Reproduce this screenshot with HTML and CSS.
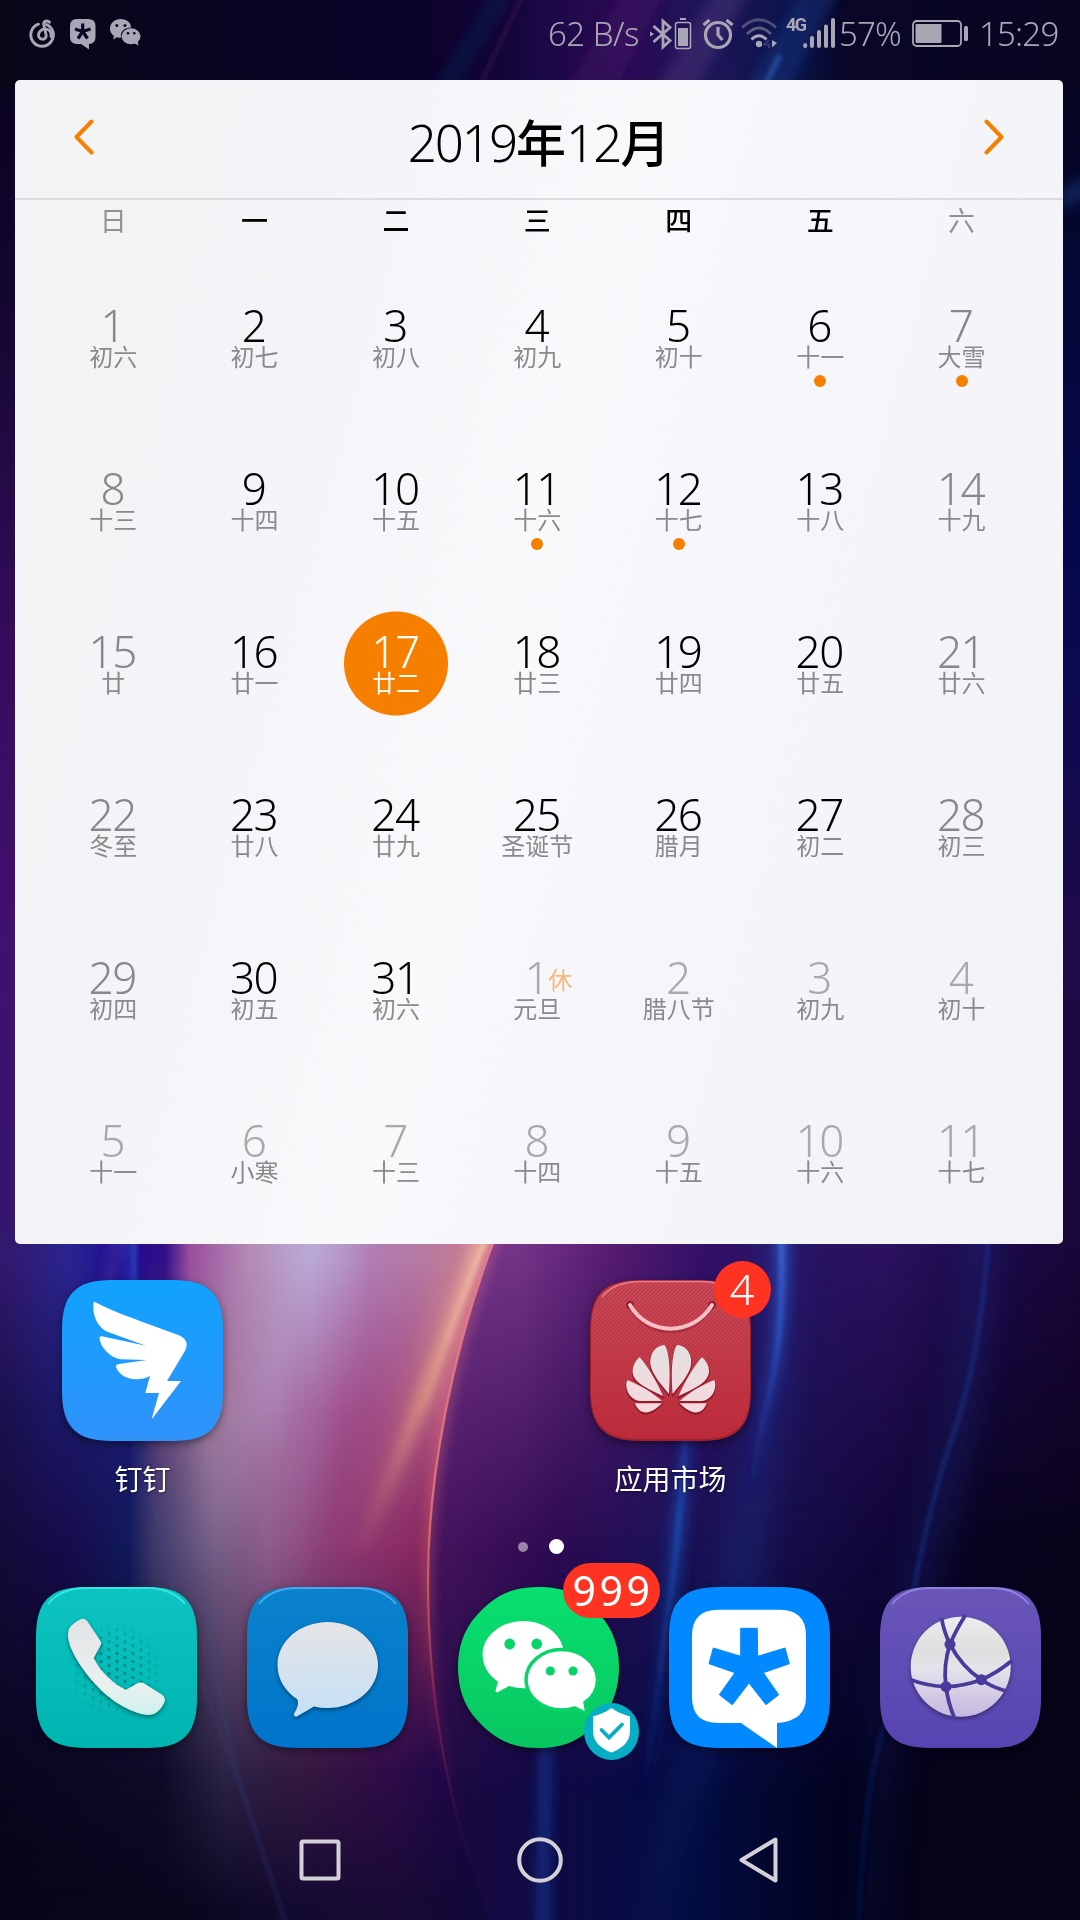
FILE: index.html
```html
<!DOCTYPE html>
<html lang="zh-CN">
<head>
<meta charset="utf-8">
<title>2019年12月</title>
<link rel="stylesheet" href="styles.css">
</head>
<body>
<svg class="wallpaper" viewBox="0 0 1080 1920" aria-hidden="true">
  <defs>
    <filter id="b2" filterUnits="userSpaceOnUse" x="-100" y="-100" width="1280" height="2120"><feGaussianBlur stdDeviation="2"/></filter>
    <filter id="b6" filterUnits="userSpaceOnUse" x="-100" y="-100" width="1280" height="2120"><feGaussianBlur stdDeviation="6"/></filter>
    <filter id="b16" filterUnits="userSpaceOnUse" x="-100" y="-100" width="1280" height="2120"><feGaussianBlur stdDeviation="16"/></filter>
    <linearGradient id="side" x2="0" y2="1">
      <stop offset="0" stop-color="#0a0618"/><stop offset=".1" stop-color="#0b0325"/><stop offset=".22" stop-color="#12062e"/>
      <stop offset=".37" stop-color="#250a48"/><stop offset=".5" stop-color="#360c5c"/><stop offset=".7" stop-color="#41106e"/><stop offset=".93" stop-color="#36156e"/><stop offset="1" stop-color="#2c1a70"/>
    </linearGradient>
    <linearGradient id="sideR" x2="0" y2="1">
      <stop offset="0" stop-color="#080620"/><stop offset=".08" stop-color="#060628"/><stop offset=".2" stop-color="#050840"/>
      <stop offset=".3" stop-color="#060850"/><stop offset=".4" stop-color="#120a50"/><stop offset=".5" stop-color="#200a48"/><stop offset=".64" stop-color="#1a0638"/><stop offset="1" stop-color="#08031a"/>
    </linearGradient>
    <linearGradient id="top"><stop offset="0" stop-color="#0a0618"/><stop offset=".37" stop-color="#0a0228"/><stop offset=".47" stop-color="#130638"/><stop offset=".5" stop-color="#1a0846"/><stop offset=".58" stop-color="#2b0a55"/><stop offset=".66" stop-color="#1c1658"/><stop offset=".74" stop-color="#0a1448"/><stop offset=".78" stop-color="#090628"/><stop offset="1" stop-color="#080620"/></linearGradient>
    <linearGradient id="l1" gradientUnits="userSpaceOnUse" x1="0" x2="500" y1="0" y2="0">
      <stop offset="0" stop-color="#33186b"/><stop offset=".14" stop-color="#2a2590"/><stop offset=".24" stop-color="#200a92"/><stop offset=".33" stop-color="#301088"/><stop offset=".38" stop-color="#9a4e9e"/><stop offset=".5" stop-color="#b48cb4"/><stop offset=".62" stop-color="#b8a4d0"/><stop offset=".74" stop-color="#b07cb4"/><stop offset=".88" stop-color="#b8789a"/><stop offset="1" stop-color="#c05a8c"/>
    </linearGradient>
    <linearGradient id="l2" gradientUnits="userSpaceOnUse" x1="0" x2="460" y1="0" y2="0">
      <stop offset="0" stop-color="#1a104c"/><stop offset=".12" stop-color="#1c1866"/><stop offset=".28" stop-color="#1c1c70"/><stop offset=".34" stop-color="#5a4078"/><stop offset=".45" stop-color="#a07a9c"/><stop offset=".6" stop-color="#a878a8"/><stop offset=".74" stop-color="#a0508c"/><stop offset=".9" stop-color="#a04880"/><stop offset="1" stop-color="#b85080"/>
    </linearGradient>
    <linearGradient id="l3" gradientUnits="userSpaceOnUse" x1="0" x2="430" y1="0" y2="0">
      <stop offset="0" stop-color="#120c38"/><stop offset=".15" stop-color="#170a4a"/><stop offset=".3" stop-color="#101a5a"/><stop offset=".36" stop-color="#3c3a6a"/><stop offset=".5" stop-color="#725c82"/><stop offset=".62" stop-color="#8c5a8a"/><stop offset=".78" stop-color="#8c3a74"/><stop offset="1" stop-color="#88265c"/>
    </linearGradient>
    <linearGradient id="l4" gradientUnits="userSpaceOnUse" x1="0" x2="450" y1="0" y2="0">
      <stop offset="0" stop-color="#0a051e"/><stop offset=".36" stop-color="#100a28"/><stop offset=".5" stop-color="#2c2446"/><stop offset=".68" stop-color="#351840"/><stop offset=".86" stop-color="#300c48"/><stop offset="1" stop-color="#1c0848"/>
    </linearGradient>
    <linearGradient id="l5" gradientUnits="userSpaceOnUse" x1="0" x2="490" y1="0" y2="0">
      <stop offset="0" stop-color="#080418"/><stop offset=".4" stop-color="#0a061e"/><stop offset=".6" stop-color="#130a30"/><stop offset=".8" stop-color="#180a34"/><stop offset="1" stop-color="#100838"/>
    </linearGradient>
    <linearGradient id="r1" gradientUnits="userSpaceOnUse" x1="430" x2="1080" y1="0" y2="0">
      <stop offset="0" stop-color="#74348a"/><stop offset=".14" stop-color="#743488"/><stop offset=".28" stop-color="#561c70"/><stop offset=".42" stop-color="#341068"/><stop offset=".55" stop-color="#281464"/><stop offset=".7" stop-color="#2c1260"/><stop offset=".86" stop-color="#1c0a4a"/><stop offset="1" stop-color="#1a0638"/>
    </linearGradient>
    <linearGradient id="r3" gradientUnits="userSpaceOnUse" x1="425" x2="1080" y1="0" y2="0">
      <stop offset="0" stop-color="#48145e"/><stop offset=".2" stop-color="#2c0a50"/><stop offset=".36" stop-color="#1c1258"/><stop offset=".5" stop-color="#18104e"/><stop offset=".7" stop-color="#100638"/><stop offset=".85" stop-color="#08031e"/><stop offset="1" stop-color="#08031a"/>
    </linearGradient>
    <linearGradient id="r5" gradientUnits="userSpaceOnUse" x1="430" x2="1080" y1="0" y2="0">
      <stop offset="0" stop-color="#1c0a40"/><stop offset=".2" stop-color="#0e0a44"/><stop offset=".4" stop-color="#030c42"/><stop offset=".62" stop-color="#020320"/><stop offset=".75" stop-color="#060218"/><stop offset="1" stop-color="#090518"/>
    </linearGradient>
    <linearGradient id="fade" x2="0" y2="1"><stop offset="0" stop-color="#fff" stop-opacity="0"/><stop offset="1" stop-color="#fff"/></linearGradient>
    <mask id="m2" maskUnits="userSpaceOnUse" x="0" y="0" width="1080" height="1920"><rect y="1260" width="1080" height="150" fill="url(#fade)"/><rect y="1410" width="1080" height="510" fill="#fff"/></mask>
    <mask id="m3" maskUnits="userSpaceOnUse" x="0" y="0" width="1080" height="1920"><rect y="1410" width="1080" height="140" fill="url(#fade)"/><rect y="1550" width="1080" height="370" fill="#fff"/></mask>
    <mask id="m4" maskUnits="userSpaceOnUse" x="0" y="0" width="1080" height="1920"><rect y="1550" width="1080" height="220" fill="url(#fade)"/><rect y="1770" width="1080" height="150" fill="#fff"/></mask>
    <mask id="m5" maskUnits="userSpaceOnUse" x="0" y="0" width="1080" height="1920"><rect y="1770" width="1080" height="140" fill="url(#fade)"/><rect y="1910" width="1080" height="10" fill="#fff"/></mask>
    <mask id="mr3" maskUnits="userSpaceOnUse" x="0" y="0" width="1080" height="1920"><rect y="1250" width="1080" height="300" fill="url(#fade)"/><rect y="1550" width="1080" height="370" fill="#fff"/></mask>
    <mask id="mr5" maskUnits="userSpaceOnUse" x="0" y="0" width="1080" height="1920"><rect y="1550" width="1080" height="250" fill="url(#fade)"/><rect y="1800" width="1080" height="120" fill="#fff"/></mask>
    <clipPath id="leftClip"><path d="M499 1230C452 1350 428 1480 428 1580C428 1700 447 1800 488 1920H0V1230Z"/></clipPath>
    <linearGradient id="edge" gradientUnits="userSpaceOnUse" x1="0" x2="0" y1="1240" y2="1880">
      <stop offset="0" stop-color="#e8788c"/><stop offset=".4" stop-color="#e87878"/><stop offset=".55" stop-color="#d0605e"/><stop offset=".72" stop-color="#9a2c58" stop-opacity=".7"/><stop offset="1" stop-color="#501048" stop-opacity="0"/>
    </linearGradient>
    <linearGradient id="warm" gradientUnits="userSpaceOnUse" x1="0" x2="0" y1="1240" y2="1560">
      <stop offset="0" stop-color="#ecb49c"/><stop offset=".5" stop-color="#e09880"/><stop offset="1" stop-color="#c06878" stop-opacity="0"/>
    </linearGradient>
    <linearGradient id="core" gradientUnits="userSpaceOnUse" x1="0" x2="0" y1="1240" y2="1420">
      <stop offset="0" stop-color="#f0c8a8"/><stop offset=".5" stop-color="#f0b0a8" stop-opacity=".6"/><stop offset="1" stop-color="#e89888" stop-opacity="0"/>
    </linearGradient>
    <linearGradient id="blueA" gradientUnits="userSpaceOnUse" x1="0" x2="0" y1="1240" y2="1500">
      <stop offset="0" stop-color="#3a70e4"/><stop offset=".35" stop-color="#2a58c8"/><stop offset="1" stop-color="#1c2c90" stop-opacity="0"/>
    </linearGradient>
    <linearGradient id="blueB" gradientUnits="userSpaceOnUse" x1="0" x2="0" y1="1400" y2="1800">
      <stop offset="0" stop-color="#1c3ca8" stop-opacity=".5"/><stop offset=".3" stop-color="#1c50b8"/><stop offset=".6" stop-color="#1440a0" stop-opacity=".7"/><stop offset="1" stop-color="#0c2878" stop-opacity="0"/>
    </linearGradient>
    <linearGradient id="blueC" gradientUnits="userSpaceOnUse" x1="0" x2="0" y1="1240" y2="1920">
      <stop offset="0" stop-color="#2446b0"/><stop offset=".5" stop-color="#1a44a8"/><stop offset="1" stop-color="#103080" stop-opacity=".5"/>
    </linearGradient>
    <linearGradient id="soft" gradientUnits="userSpaceOnUse" x1="0" x2="0" y1="1240" y2="1620">
      <stop offset="0" stop-color="#c0b4e4"/><stop offset="1" stop-color="#a080c0" stop-opacity="0"/>
    </linearGradient>
  </defs>
  <rect width="1080" height="1920" fill="#0a0520"/>
  <rect width="540" height="1300" fill="url(#side)"/>
  <rect x="540" width="540" height="1920" fill="url(#sideR)"/>
  <rect width="1080" height="88" fill="url(#top)"/>
  <g filter="url(#b6)">
    <path d="M720 -20H756L690 100H650Z" fill="#6a4a90" opacity=".3"/>
    <path d="M630 -20H670L610 100H560Z" fill="#48106a" opacity=".35"/>
    <path d="M806 -20H846L782 100H740Z" fill="#16388a" opacity=".4"/>
    <path d="M500 -20H520L450 100H425Z" fill="#143070" opacity=".25"/>
    <path d="M1090 175V195L1060 212V190Z" fill="#1c4890" opacity=".4"/>
  </g>
  <g filter="url(#b2)"><path d="M780 55L762 92" stroke="#3470c8" stroke-width="6" opacity=".5"/><path d="M525 -10L478 90" stroke="#50205c" stroke-width="3" opacity=".5"/></g>

  <rect y="1238" width="1080" height="682" fill="url(#r1)"/>
  <rect y="1238" width="1080" height="682" fill="url(#r3)" mask="url(#mr3)"/>
  <rect y="1238" width="1080" height="682" fill="url(#r5)" mask="url(#mr5)"/>
  <g fill="none">
    <g filter="url(#b16)" stroke="url(#blueC)" opacity=".28"><path d="M776 1200C786 1420 745 1480 735 1640C720 1740 660 1800 650 1960" stroke-width="34"/><path d="M980 1200C985 1420 920 1530 890 1700L870 1960" stroke-width="24"/></g>
    <g filter="url(#b6)"><path d="M780 1200Q788 1320 768 1400Q750 1480 750 1560" stroke="url(#blueA)" stroke-width="12" opacity=".6"/><path d="M690 1400Q678 1540 664 1660Q655 1740 636 1860" stroke="url(#blueB)" stroke-width="16" opacity=".55"/><path d="M548 1700Q543 1800 543 1960" stroke="#143c9c" stroke-width="14" opacity=".6"/></g>
    <g filter="url(#b2)"><path d="M779 1200Q788 1320 768 1400T752 1520" stroke="url(#blueA)" stroke-width="5" opacity=".8"/><path d="M688 1400Q681 1520 670 1600T640 1820" stroke="url(#blueB)" stroke-width="5" opacity=".75"/><path d="M990 1200Q986 1330 958 1420Q930 1500 914 1590Q905 1640 880 1740Q860 1820 858 1960" stroke="url(#blueC)" stroke-width="4" opacity=".45"/></g>
  </g>
  <g clip-path="url(#leftClip)">
    <rect y="1230" width="520" height="690" fill="url(#l1)"/>
    <rect y="1230" width="520" height="690" fill="url(#l2)" mask="url(#m2)"/>
    <rect y="1230" width="520" height="690" fill="url(#l3)" mask="url(#m3)"/>
    <rect y="1230" width="520" height="690" fill="url(#l4)" mask="url(#m4)"/>
    <rect y="1230" width="520" height="690" fill="url(#l5)" mask="url(#m5)"/>
    <g filter="url(#b16)" fill="none"><path d="M316 1200Q300 1330 245 1440T200 1620" stroke="url(#soft)" stroke-width="28" opacity=".5"/><path d="M350 1200Q325 1400 270 1620" stroke="url(#soft)" stroke-width="20" opacity=".35"/><path d="M495 1200Q430 1380 335 1620" stroke="url(#warm)" stroke-width="30" opacity=".45"/></g>
    <g filter="url(#b6)" fill="none"><path d="M128 1200Q128 1300 134 1400T150 1620" stroke="url(#blueA)" stroke-width="10" opacity=".35"/><path d="M493 1200Q440 1370 355 1560" stroke="url(#warm)" stroke-width="14" opacity=".8"/><path d="M124 1200L100 1330" stroke="#50369c" stroke-width="8" opacity=".7"/></g>
    <g filter="url(#b2)" fill="none"><path d="M498 1210Q455 1310 420 1420" stroke="url(#core)" stroke-width="6" opacity=".85"/><path d="M134 1220V1330" stroke="url(#blueA)" stroke-width="4" opacity=".5"/><path d="M144 1450Q170 1600 212 1710T290 1940" stroke="#455ab0" stroke-width="2.500" opacity=".16"/><path d="M205 1600Q225 1750 262 1850L292 1940" stroke="#3060a0" stroke-width="2.500" opacity=".2"/></g>
  </g>
  <path d="M499 1230C452 1350 428 1480 428 1580C428 1700 447 1800 488 1920" fill="none" stroke="url(#edge)" stroke-width="7" filter="url(#b6)" opacity=".5"/>
  <path d="M498 1230C451 1350 428 1480 428 1580C428 1700 447 1800 488 1920" fill="none" stroke="url(#edge)" stroke-width="2.300" opacity=".85"/>
</svg>

<div class="screen">
  <header class="status">
    <div class="notices">
      <svg width="27" height="30" viewBox="0 0 27 30" fill="none" stroke="currentColor" stroke-width="2.900" stroke-linecap="round"><path d="M9.500 5.200A11.300 11.300 0 1 0 17.500 5.500"/><path d="M20.500 3.200C18.500 1 14.500 2 14.700 5.200L17 15.500C17.700 18.700 15.800 20.200 13.700 20.200C10.500 20.200 9 17.500 9.700 14.700C10.500 11.500 14 9.500 17.500 10.200C21 11 22.500 14 22 17.500"/></svg>
      <svg width="26" height="31" viewBox="0 0 26 31"><path d="M7 0H18Q25.500 0 25.500 7V18Q25.500 24.500 19 25V30.500L11 25H7Q0 25 0 18V7Q0 0 7 0Z" fill="currentColor"/><path d="M12.700 12.500V4.500M12.700 12.500L20.500 10M12.700 12.500L17.500 19.500M12.700 12.500L8 19.500M12.700 12.500L5 10" stroke="#0b0522" stroke-width="3.200"/></svg>
      <svg width="31" height="27" viewBox="0 0 31 27" fill="currentColor"><path d="M10.500 0C17 0 21 4 21 8.500C14 8.500 10 13 11 18.500Q9 19 7 18.300L3 20.500L4 17Q0 14 0 9.500C0 4 5 0 10.500 0Z"/><ellipse cx="21" cy="17.300" rx="9.500" ry="8"/><path d="M24 24L28.500 26.500L27.500 21Z"/><g fill="#0b0522"><circle cx="6.800" cy="6.500" r="1.500"/><circle cx="15" cy="6.500" r="1.500"/><circle cx="18" cy="14.200" r="1.300"/><circle cx="24.300" cy="14.200" r="1.300"/></g></svg>
    </div>
    <div class="system">
      <span class="rate">62 B/s</span>
      <svg class="bt" width="42" height="32" viewBox="0 0 42 32"><path d="M3.500 8L20 22.500L13 29V3L20 9.500L3.500 24" fill="none" stroke="currentColor" stroke-width="2.800"/><path d="M0 13.500L4 16L0 18.500Z" fill="currentColor"/><rect x="25.500" y="4.500" width="15" height="26" rx="2" fill="none" stroke="currentColor" stroke-width="1.500"/><path d="M30 0H36V2H30ZM28 10H38V28H28Z" fill="currentColor"/></svg>
      <svg class="alarm" width="32" height="32" viewBox="0 0 32 32" fill="none" stroke="currentColor"><circle cx="16" cy="17" r="12.500" stroke-width="3.200"/><path d="M16 9V17L20.500 22" stroke-width="3.200"/><path d="M1.500 7L7.500 2M30.500 7L24.500 2" stroke-width="3"/></svg>
      <svg class="wifi" width="38" height="32" viewBox="0 0 38 32" fill="none" stroke="currentColor"><path d="M1 9.500Q18 -6 35 9.500" stroke-width="2.700" opacity=".4"/><path d="M6 16Q18 4 30 16" stroke-width="2.700" opacity=".5"/><path d="M10.500 21.500Q18 14 25.500 21.500" stroke-width="2.900"/><circle cx="18" cy="26" r="3.200" fill="currentColor" stroke="none"/><path d="M31 22L36 25L31 29.500Z" fill="currentColor" stroke="none"/><path d="M28 22L23 26.500H28V30" opacity=".3" stroke-width="1.500"/></svg>
      <span class="gen">4G</span>
      <svg class="bars" width="33" height="31" viewBox="0 0 33 31" stroke="currentColor" stroke-width="4" stroke-linecap="round"><path d="M2.200 27V28M9 20V28M16 14V28M23 8.500V28M30 2V28"/></svg>
      <span class="pct">57%</span>
      <svg class="batt" width="57" height="27" viewBox="0 0 57 27"><rect x="1" y="1" width="48" height="25" rx="3.500" fill="none" stroke="currentColor" stroke-width="1.800"/><rect x="3.500" y="4" width="26" height="19" rx="1" fill="currentColor"/><rect x="52" y="6" width="4" height="15" rx="1.500" fill="currentColor"/></svg>
      <span class="clock">15:29</span>
    </div>
  </header>

  <main class="card">
    <div class="month">
      <svg width="20" height="36" viewBox="0 0 20 36" fill="none" stroke="#f77f00" stroke-width="4" stroke-linecap="round" stroke-linejoin="round"><path d="M17.500 2.500L2.500 18L17.500 33.500"/></svg>
      <h1>2019<b>年</b>12<b>月</b></h1>
      <svg width="20" height="36" viewBox="0 0 20 36" fill="none" stroke="#f77f00" stroke-width="4" stroke-linecap="round" stroke-linejoin="round"><path d="M2.500 2.500L17.500 18L2.500 33.500"/></svg>
    </div>
    <div class="week"><span class="off">日</span><span>一</span><span>二</span><span>三</span><span>四</span><span>五</span><span class="off">六</span></div>
    <div class="days">
      <div class="day off"><i>1</i><em>初六</em></div><div class="day"><i>2</i><em>初七</em></div><div class="day"><i>3</i><em>初八</em></div><div class="day"><i>4</i><em>初九</em></div><div class="day"><i>5</i><em>初十</em></div><div class="day event"><i>6</i><em>十一</em></div><div class="day off event"><i>7</i><em>大雪</em></div>
      <div class="day off"><i>8</i><em>十三</em></div><div class="day"><i>9</i><em>十四</em></div><div class="day"><i>10</i><em>十五</em></div><div class="day event"><i>11</i><em>十六</em></div><div class="day event"><i>12</i><em>十七</em></div><div class="day"><i>13</i><em>十八</em></div><div class="day off"><i>14</i><em>十九</em></div>
      <div class="day off"><i>15</i><em>廿</em></div><div class="day"><i>16</i><em>廿一</em></div><div class="day today"><i>17</i><em>廿二</em></div><div class="day"><i>18</i><em>廿三</em></div><div class="day"><i>19</i><em>廿四</em></div><div class="day"><i>20</i><em>廿五</em></div><div class="day off"><i>21</i><em>廿六</em></div>
      <div class="day off"><i>22</i><em>冬至</em></div><div class="day"><i>23</i><em>廿八</em></div><div class="day"><i>24</i><em>廿九</em></div><div class="day"><i>25</i><em>圣诞节</em></div><div class="day"><i>26</i><em>腊月</em></div><div class="day"><i>27</i><em>初二</em></div><div class="day off"><i>28</i><em>初三</em></div>
      <div class="day off"><i>29</i><em>初四</em></div><div class="day"><i>30</i><em>初五</em></div><div class="day"><i>31</i><em>初六</em></div><div class="day next"><i>1<span class="rest">休</span></i><em>元旦</em></div><div class="day next"><i>2</i><em>腊八节</em></div><div class="day next"><i>3</i><em>初九</em></div><div class="day next"><i>4</i><em>初十</em></div>
      <div class="day next"><i>5</i><em>十一</em></div><div class="day next"><i>6</i><em>小寒</em></div><div class="day next"><i>7</i><em>十三</em></div><div class="day next"><i>8</i><em>十四</em></div><div class="day next"><i>9</i><em>十五</em></div><div class="day next"><i>10</i><em>十六</em></div><div class="day next"><i>11</i><em>十七</em></div>
    </div>
  </main>

  <section class="apps">
    <div class="app">
      <svg class="icon" viewBox="0 0 161 161">
        <defs><linearGradient id="ding" x2="0" y2="1"><stop offset="0" stop-color="#10a2ff"/><stop offset="1" stop-color="#3092fa"/></linearGradient>
        <path id="tile" d="M0 50C0 14 14 0 50 0H111C147 0 161 14 161 50V111C161 147 147 161 111 161H50C14 161 0 147 0 111Z"/></defs>
        <use href="#tile" fill="url(#ding)"/>
        <path fill="#fff" d="M31.500 23Q32 21 34 22.500C50 31 65 36 80.600 42L115 54.500Q128 59 123.500 70L105 101H119L89.500 139.500L97 113H83.300L88 96C76 102 59 100 54 87Q53.500 84.500 57 84L84.700 80L58 79.300C47 77 38 66 37.500 58Q37.500 55.500 41 56.500L84 65.700L46 52C36 48 30 36 31.500 23Z"/>
      </svg>
      <span>钉钉</span>
    </div>
    <div class="app market">
      <svg class="icon" viewBox="0 0 161 161">
        <defs><linearGradient id="hw" x2="0" y2="1"><stop offset="0" stop-color="#c94a58"/><stop offset="1" stop-color="#c02c3c"/></linearGradient>
        <linearGradient id="petal" gradientUnits="userSpaceOnUse" x1="0" x2="0" y1="65" y2="133"><stop offset="0" stop-color="#e2e0e0"/><stop offset="1" stop-color="#f8d8de"/></linearGradient>
        <pattern id="weave" width="4" height="4" patternUnits="userSpaceOnUse"><path d="M0 4L4 0" stroke="#9c2030" stroke-width=".8" opacity=".55"/></pattern>
        <g id="petals"><path d="M78.900 114C80.500 95 80 72 74.500 65C64 66 58.500 76 61 87C63.500 96 71 104 78.900 114Z"/><path d="M73 116C67 102 59 88 49.600 77C41 85 40.500 95 47 101C53 107 63 111 73 116Z"/><path d="M72 121C62 112 50 105 37.200 100C34 109 40 120 50 121Z"/><path d="M72 123.300H44.800C48 131 53 133.500 59 132C64 130.500 68 127 72 123.300Z"/></g></defs>
        <use href="#tile" fill="#a02030"/><path d="M1 50C1 15 15 1 50 1H111C146 1 160 15 160 50V110C160 145 146 159 111 159H50C15 159 1 145 1 110Z" fill="url(#hw)"/><use href="#tile" fill="url(#weave)"/>
        <path d="M12 17C21 6 33 1.500 50 1.500H111C128 1.500 140 6 149 17" fill="none" stroke="#e8808e" stroke-width="1.500"/>
        <circle cx="40" cy="25" r="3.800" fill="#8c1828"/><circle cx="122" cy="25" r="3.800" fill="#8c1828"/>
        <path d="M40 26C58 59 103 59 122 26" fill="none" stroke="#8c1828" stroke-width="5" opacity=".4"/>
        <path d="M40 25C58 56.500 103 56.500 122 25" fill="none" stroke="#f6c0c8" stroke-width="4" stroke-linecap="round"/>
        <g fill="#851525" opacity=".75" stroke="#851525" stroke-width="1.500" transform="translate(0 1.500)"><use href="#petals"/><use href="#petals" transform="translate(161.600 0) scale(-1 1)"/></g>
        <g fill="url(#petal)"><use href="#petals"/><use href="#petals" transform="translate(161.600 0) scale(-1 1)"/></g>
      </svg>
      <b class="badge one">4</b>
      <span>应用市场</span>
    </div>
  </section>

  <div class="pager"><i></i><i class="on"></i></div>

  <section class="dock">
    <div class="app"><svg class="icon" viewBox="0 0 161 161">
      <defs><linearGradient id="tel" x2="0" y2="1"><stop offset="0" stop-color="#0cc4c2"/><stop offset="1" stop-color="#00b4b0"/></linearGradient>
      <linearGradient id="set" x2="0" y2="1"><stop offset="0" stop-color="#e4e4e6"/><stop offset=".7" stop-color="#eaf0f0"/><stop offset="1" stop-color="#cdf0ec"/></linearGradient>
      <pattern id="mesh" width="16" height="8" patternUnits="userSpaceOnUse" x="61" y="62.500"><circle cx="4" cy="4" r="1.600" fill="#007c7c"/><circle cx="12" cy="0" r="1.600" fill="#007c7c"/><circle cx="12" cy="8" r="1.600" fill="#007c7c"/></pattern>
      <radialGradient id="spot" gradientUnits="userSpaceOnUse" cx="80" cy="83" r="50"><stop offset=".35" stop-color="#fff"/><stop offset="1" stop-color="#fff" stop-opacity="0"/></radialGradient><mask id="spotMask"><rect width="161" height="161" fill="url(#spot)"/></mask></defs>
      <use href="#tile" fill="url(#tel)"/><path d="M12 17C21 6 33 1 50 1H111C128 1 140 6 149 17" fill="none" stroke="#38e4e2" stroke-width="1.800"/>
      <rect width="161" height="161" fill="url(#mesh)" mask="url(#spotMask)"/>
      <path class="lift" fill="url(#set)" d="M44 32.500Q49 30.500 51.500 34.500L64.500 54Q65.800 57 64 59.500L57.700 71C64 84 77 97 90 102.700L101 96.500Q105 94.500 109 97L126.500 108Q130 111 128.500 115C127 119 124 123 120 126Q117 128 112 128C98 127 77 116 62 100C45 82 31 60 32 46Q32 42 35 39Q39 35 44 32.500Z"/>
    </svg></div>
    <div class="app"><svg class="icon" viewBox="0 0 161 161">
      <defs><linearGradient id="sms" x2="0" y2="1"><stop offset="0" stop-color="#0a82cc"/><stop offset="1" stop-color="#0074ca"/></linearGradient><linearGradient id="bub" x2="0" y2="1"><stop offset="0" stop-color="#e4e4e6"/><stop offset="1" stop-color="#c6e0f6"/></linearGradient></defs>
      <use href="#tile" fill="url(#sms)"/><path d="M12 17C21 6 33 1 50 1H111C128 1 140 6 149 17" fill="none" stroke="#48a8ec" stroke-width="1.800"/>
      <path class="lift" fill="url(#bub)" d="M80.700 35C108.300 35 131 54.300 131 78C131 102 108.300 121 80.700 121Q73 121 67 119.500C62 122 56 126 50 129.500Q46 130 47 126.500C51 120 52 116 50 112C39 105 30.500 93 30.500 78C30.500 54.300 53 35 80.700 35Z"/>
    </svg></div>
    <div class="app wechat"><svg class="icon" viewBox="0 0 161 161">
      <defs><linearGradient id="wx" x2="0" y2="1"><stop offset="0" stop-color="#08e070"/><stop offset="1" stop-color="#08c660"/></linearGradient></defs>
      <path fill="url(#wx)" d="M0 80C0 62 5 43 19 28C38 7 56 0 80.500 0C105 0 123 7 142 28C156 43 161 62 161 80C161 99 156 118 142 133C123 154 105 161 80.500 161C56 161 38 154 19 133C5 118 0 99 0 80Z"/>
      <path fill="#fff" d="M65.300 34C87.800 34 106 49 106 67.700C106 86 88 101.300 65.300 101.300Q57 101 51 99L40 105Q36.500 106 38 102L40 94.500C30 88 24.600 78 24.600 67.700C24.600 49 43 34 65.300 34Z"/>
      <path fill="#fff" stroke="#08d468" stroke-width="3.500" d="M103.500 62.500C123 62.500 139.500 76 139.500 92.700C139.500 102 135 110 127 115.500L129 127L117 121Q110 123 103.500 123C84 123 68 109.500 68 92.700C68 76 84 62.500 103.500 62.500Z"/>
      <g fill="#08d468"><circle cx="51.700" cy="57" r="5.400"/><circle cx="78.700" cy="57" r="5.400"/><circle cx="92.300" cy="84" r="4.600"/><circle cx="115" cy="84" r="4.600"/></g>
    </svg>
      <b class="badge many">999</b>
      <svg class="shield" viewBox="0 0 55 57"><ellipse cx="27.500" cy="28.500" rx="27.500" ry="28.500" fill="#06adc4"/><path fill="#fff" d="M27.500 5Q35 10.500 46 13.500V28C46 39 38 45.500 27.500 49.500C17 45.500 9 39 9 28V13.500Q20 10.500 27.500 5Z"/><path d="M17.500 27L25 34.500L38 21.500" fill="none" stroke="#06adc4" stroke-width="3.800" stroke-linecap="round"/></svg>
    </div>
    <div class="app"><svg class="icon" viewBox="0 0 161 161"><use href="#tile" fill="#0289ff"/><path fill="#fff" d="M49 22.700H111Q137 22.700 137 49V110Q137 134 108 136V161L72 136H49Q23 136 23 110V49Q23 22.700 49 22.700Z"/><path fill="#0289ff" d="M71.700 41.300H88.300L88.700 69.300L116 61L120.300 76.700L94.300 85.700L109.700 107.700L97 117.700L80 96L63.300 117.700L50.300 107.700L66 85.700L40 76.700L44.300 61L71.700 69.300Z" stroke="#0289ff" stroke-width="1" stroke-linejoin="round"/></svg></div>
    <div class="app"><svg class="icon" viewBox="0 0 161 161">
      <defs><linearGradient id="web" x2="0" y2="1"><stop offset="0" stop-color="#6a56b8"/><stop offset="1" stop-color="#5644b2"/></linearGradient><linearGradient id="globe" x2="0" y2="1"><stop offset="0" stop-color="#ececee"/><stop offset=".35" stop-color="#dededf"/><stop offset=".5" stop-color="#e6e4ea"/><stop offset="1" stop-color="#c4b8e0"/></linearGradient></defs>
      <use href="#tile" fill="url(#web)"/><path d="M12 17C21 6 33 1 50 1H111C128 1 140 6 149 17" fill="none" stroke="#9080e0" stroke-width="1.800"/>
      <circle class="lift" cx="80.700" cy="79.700" r="50" fill="url(#globe)"/>
      <g fill="none" stroke="#4a3a9c" stroke-width="3.800"><path d="M61.500 31Q64 45 70 57.300Q76 43 85.500 28M70 57.300Q63 78 66 99.700Q68 116 74.500 131M70 57.300Q82 80 101.300 92.700M30 92.500Q47 99 66 99.700Q84 99 101.300 92.700Q117 86 132 73.500M101.300 92.700Q112 100 126 104"/></g>
      <g fill="#4a3a9c"><circle cx="70" cy="57.300" r="5.500"/><circle cx="66" cy="99.700" r="5.500"/><circle cx="101.300" cy="92.700" r="5.500"/></g>
    </svg></div>
  </section>

  <nav class="keys">
    <svg viewBox="0 0 46 46"><rect x="4.500" y="4.500" width="37" height="37" rx="1.500"/></svg>
    <svg viewBox="0 0 46 46"><circle cx="23" cy="23" r="20.800"/></svg>
    <svg viewBox="0 0 46 46"><path d="M4.500 23L38.500 2.500V43.500Z"/></svg>
  </nav>
</div>
</body>
</html>
```
FILE: styles.css
```css
* { box-sizing: border-box; }
body {
  margin: 0;
  width: 1080px;
  height: 1920px;
  overflow: hidden;
  position: relative;
  font-family: "Noto Sans", "Noto Sans CJK SC", sans-serif;
  font-weight: 300;
  background: #0a0520;
}
i, em { font-style: normal; }
svg { display: block; flex: none; }
.wallpaper { position: absolute; inset: 0; width: 1080px; height: 1920px; }
.screen { position: relative; display: flex; flex-direction: column; height: 1920px; }

.status {
  height: 80px;
  padding: 18px 22px 0 29px;
  display: flex;
  justify-content: space-between;
  color: #a9a6b6;
  font-size: 33px;
  line-height: 32px;
  letter-spacing: -.8px;
}
.notices { display: flex; align-items: flex-start; gap: 14px; padding-top: 1px; }
.system { display: flex; align-items: flex-start; white-space: nowrap; }
.system span { display: block; flex: none; }
.system .rate { width: 102px; letter-spacing: -.5px; }
.alarm { margin-left: 10px; }
.wifi { margin-left: 7px; }
.system .gen { width: 17px; margin-left: 7px; font: 700 18px/14px "Roboto", sans-serif; letter-spacing: -1.5px; white-space: nowrap; }
.system .pct { width: 65px; margin-left: 3px; }
.batt { margin: 2px 10px 0 8px; }
.system .clock { width: 79px; }

.card {
  height: 1164px;
  margin: 0 17px 0 15px;
  border-radius: 5px;
  background: linear-gradient(105deg, #f3f4f5 0%, #f4f3f7 25%, #f9f9fc 48%, #f5f5fa 65%, #f2f3f6 100%);
}
.month {
  height: 120px;
  padding: 0 59px;
  display: flex;
  align-items: center;
  justify-content: space-between;
  border-bottom: 2px solid #dcdce0;
}
.month svg { margin-top: -4px; }
.month h1 { margin: 6px 0 0; font-size: 51px; font-weight: 300; letter-spacing: -2px; line-height: 60px; color: #000; }
.month b { font-size: 50px; font-weight: 500; letter-spacing: 0; }
.week, .days { display: grid; grid-template-columns: repeat(7, 141.4px); padding-left: 27.5px; text-align: center; }
.week { height: 56px; font-size: 27px; font-weight: 500; line-height: 41px; color: #000; }
.week .off { color: #919194; font-weight: 400; }
.day {
  height: 163px;
  padding-top: 50px;
  display: flex;
  flex-direction: column;
  align-items: center;
  position: relative;
  color: #000;
}
.day i { margin-left: -2px; font-size: 44px; line-height: 38px; letter-spacing: -1.5px; position: relative; }
.day em { font-size: 24px; font-weight: 400; line-height: 26px; color: #8a8a8d; }
.day.off i { color: #88888b; }
.day.next i { color: #a9a9ac; }
.day.event::after { content: ""; width: 12px; height: 12px; margin-top: 5px; border-radius: 50%; background: #f77f00; }
.day.today { background: radial-gradient(circle at 50% 50%, #f77f00 51.500px, transparent 52.500px); }
.day.today i, .day.today em { color: #fff; }
.rest { position: absolute; left: 100%; top: 3px; font-size: 24px; font-weight: 400; color: #f9b878; letter-spacing: 0; }

.icon { width: 161px; height: 161px; filter: drop-shadow(0 3px 4px rgba(0, 0, 0, .45)); }
.lift { filter: drop-shadow(0 2px 2px rgba(0, 0, 0, .4)); }
.apps { display: grid; grid-template-columns: repeat(4, 264px); padding: 36px 0 0 10.5px; height: 290px; }
.app { position: relative; display: flex; flex-direction: column; align-items: center; color: #fff; font-size: 28px; line-height: 36px; }
.app span { margin-top: 20px; font-weight: 400; text-shadow: 0 1px 3px rgba(0, 0, 0, .5); }
.market { grid-column: 3; }
.badge { position: absolute; background: #ff3322; color: #fff; font-weight: 300; text-align: center; }
.badge.one { left: 175px; top: -19px; width: 57px; height: 57px; border-radius: 50%; font-size: 43px; line-height: 55px; }
.badge.many { left: 130px; top: -24px; width: 97px; height: 55px; border-radius: 28px; font-size: 41px; line-height: 54px; letter-spacing: 3.500px; padding-left: 3px; font-weight: 400; }
.pager { height: 25px; padding-left: 2px; display: flex; align-items: center; justify-content: center; gap: 21px; }
.pager i { width: 10px; height: 10px; border-radius: 50%; background: #9a84ac; }
.pager .on { width: 15px; height: 15px; background: #fff; }
.dock { display: grid; grid-template-columns: repeat(5, 211px); padding-left: 11px; margin-top: 28px; height: 173px; }
.shield { position: absolute; left: 151px; top: 116px; width: 55px; height: 57px; }
.keys { display: flex; justify-content: center; gap: 174px; padding-top: 77px; }
.keys svg { width: 46px; height: 46px; fill: none; stroke: #d4d2d8; stroke-width: 4; stroke-linejoin: round; }
```
